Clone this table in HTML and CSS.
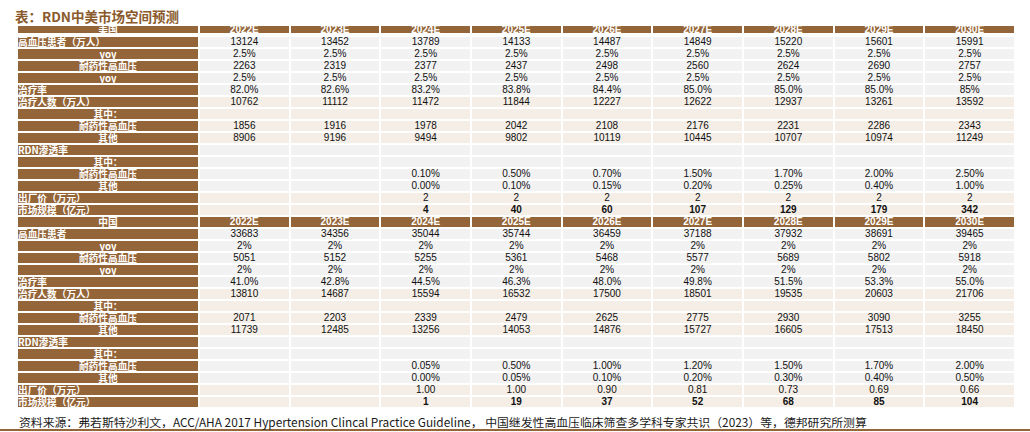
FILE: index.html
```html
<!DOCTYPE html>
<html lang="zh-CN">
<head>
<meta charset="utf-8">
<title>RDN中美市场空间预测</title>
<link rel="stylesheet" href="styles.css">
</head>
<body>
<h1 class="title">表：RDN中美市场空间预测</h1>
<div class="table">
  <div class="row hd clip"><div class="lbl">美国</div><div class="c">2022E</div><div class="c">2023E</div><div class="c">2024E</div><div class="c">2025E</div><div class="c">2026E</div><div class="c">2027E</div><div class="c">2028E</div><div class="c">2029E</div><div class="c">2030E</div></div>
  <div class="row g"><div class="lbl l">高血压患者（万人）</div><div class="c">13124</div><div class="c">13452</div><div class="c">13789</div><div class="c">14133</div><div class="c">14487</div><div class="c">14849</div><div class="c">15220</div><div class="c">15601</div><div class="c">15991</div></div>
  <div class="row g"><div class="lbl">yoy</div><div class="c">2.5%</div><div class="c">2.5%</div><div class="c">2.5%</div><div class="c">2.5%</div><div class="c">2.5%</div><div class="c">2.5%</div><div class="c">2.5%</div><div class="c">2.5%</div><div class="c">2.5%</div></div>
  <div class="row g"><div class="lbl">耐药性高血压</div><div class="c">2263</div><div class="c">2319</div><div class="c">2377</div><div class="c">2437</div><div class="c">2498</div><div class="c">2560</div><div class="c">2624</div><div class="c">2690</div><div class="c">2757</div></div>
  <div class="row g"><div class="lbl">yoy</div><div class="c">2.5%</div><div class="c">2.5%</div><div class="c">2.5%</div><div class="c">2.5%</div><div class="c">2.5%</div><div class="c">2.5%</div><div class="c">2.5%</div><div class="c">2.5%</div><div class="c">2.5%</div></div>
  <div class="row g"><div class="lbl l">治疗率</div><div class="c">82.0%</div><div class="c">82.6%</div><div class="c">83.2%</div><div class="c">83.8%</div><div class="c">84.4%</div><div class="c">85.0%</div><div class="c">85.0%</div><div class="c">85.0%</div><div class="c">85%</div></div>
  <div class="row b"><div class="lbl l">治疗人数（万人）</div><div class="c">10762</div><div class="c">11112</div><div class="c">11472</div><div class="c">11844</div><div class="c">12227</div><div class="c">12622</div><div class="c">12937</div><div class="c">13261</div><div class="c">13592</div></div>
  <div class="row b"><div class="lbl">其中：</div><div class="c"></div><div class="c"></div><div class="c"></div><div class="c"></div><div class="c"></div><div class="c"></div><div class="c"></div><div class="c"></div><div class="c"></div></div>
  <div class="row b"><div class="lbl">耐药性高血压</div><div class="c">1856</div><div class="c">1916</div><div class="c">1978</div><div class="c">2042</div><div class="c">2108</div><div class="c">2176</div><div class="c">2231</div><div class="c">2286</div><div class="c">2343</div></div>
  <div class="row b"><div class="lbl">其他</div><div class="c">8906</div><div class="c">9196</div><div class="c">9494</div><div class="c">9802</div><div class="c">10119</div><div class="c">10445</div><div class="c">10707</div><div class="c">10974</div><div class="c">11249</div></div>
  <div class="row g"><div class="lbl l">RDN渗透率</div><div class="c"></div><div class="c"></div><div class="c"></div><div class="c"></div><div class="c"></div><div class="c"></div><div class="c"></div><div class="c"></div><div class="c"></div></div>
  <div class="row g"><div class="lbl">其中：</div><div class="c"></div><div class="c"></div><div class="c"></div><div class="c"></div><div class="c"></div><div class="c"></div><div class="c"></div><div class="c"></div><div class="c"></div></div>
  <div class="row g"><div class="lbl">耐药性高血压</div><div class="c"></div><div class="c"></div><div class="c">0.10%</div><div class="c">0.50%</div><div class="c">0.70%</div><div class="c">1.50%</div><div class="c">1.70%</div><div class="c">2.00%</div><div class="c">2.50%</div></div>
  <div class="row g"><div class="lbl">其他</div><div class="c"></div><div class="c"></div><div class="c">0.00%</div><div class="c">0.10%</div><div class="c">0.15%</div><div class="c">0.20%</div><div class="c">0.25%</div><div class="c">0.40%</div><div class="c">1.00%</div></div>
  <div class="row b"><div class="lbl l">出厂价（万元）</div><div class="c"></div><div class="c"></div><div class="c">2</div><div class="c">2</div><div class="c">2</div><div class="c">2</div><div class="c">2</div><div class="c">2</div><div class="c">2</div></div>
  <div class="row b tot"><div class="lbl l">市场规模（亿元）</div><div class="c"></div><div class="c"></div><div class="c">4</div><div class="c">40</div><div class="c">60</div><div class="c">107</div><div class="c">129</div><div class="c">179</div><div class="c">342</div></div>

  <div class="row hd"><div class="lbl">中国</div><div class="c">2022E</div><div class="c">2023E</div><div class="c">2024E</div><div class="c">2025E</div><div class="c">2026E</div><div class="c">2027E</div><div class="c">2028E</div><div class="c">2029E</div><div class="c">2030E</div></div>
  <div class="row g"><div class="lbl l">高血压患者</div><div class="c">33683</div><div class="c">34356</div><div class="c">35044</div><div class="c">35744</div><div class="c">36459</div><div class="c">37188</div><div class="c">37932</div><div class="c">38691</div><div class="c">39465</div></div>
  <div class="row g"><div class="lbl">yoy</div><div class="c">2%</div><div class="c">2%</div><div class="c">2%</div><div class="c">2%</div><div class="c">2%</div><div class="c">2%</div><div class="c">2%</div><div class="c">2%</div><div class="c">2%</div></div>
  <div class="row g"><div class="lbl">耐药性高血压</div><div class="c">5051</div><div class="c">5152</div><div class="c">5255</div><div class="c">5361</div><div class="c">5468</div><div class="c">5577</div><div class="c">5689</div><div class="c">5802</div><div class="c">5918</div></div>
  <div class="row g"><div class="lbl">yoy</div><div class="c">2%</div><div class="c">2%</div><div class="c">2%</div><div class="c">2%</div><div class="c">2%</div><div class="c">2%</div><div class="c">2%</div><div class="c">2%</div><div class="c">2%</div></div>
  <div class="row g"><div class="lbl l">治疗率</div><div class="c">41.0%</div><div class="c">42.8%</div><div class="c">44.5%</div><div class="c">46.3%</div><div class="c">48.0%</div><div class="c">49.8%</div><div class="c">51.5%</div><div class="c">53.3%</div><div class="c">55.0%</div></div>
  <div class="row b"><div class="lbl l">治疗人数（万人）</div><div class="c">13810</div><div class="c">14687</div><div class="c">15594</div><div class="c">16532</div><div class="c">17500</div><div class="c">18501</div><div class="c">19535</div><div class="c">20603</div><div class="c">21706</div></div>
  <div class="row b"><div class="lbl">其中：</div><div class="c"></div><div class="c"></div><div class="c"></div><div class="c"></div><div class="c"></div><div class="c"></div><div class="c"></div><div class="c"></div><div class="c"></div></div>
  <div class="row b"><div class="lbl">耐药性高血压</div><div class="c">2071</div><div class="c">2203</div><div class="c">2339</div><div class="c">2479</div><div class="c">2625</div><div class="c">2775</div><div class="c">2930</div><div class="c">3090</div><div class="c">3255</div></div>
  <div class="row b"><div class="lbl">其他</div><div class="c">11739</div><div class="c">12485</div><div class="c">13256</div><div class="c">14053</div><div class="c">14876</div><div class="c">15727</div><div class="c">16605</div><div class="c">17513</div><div class="c">18450</div></div>
  <div class="row g"><div class="lbl l">RDN渗透率</div><div class="c"></div><div class="c"></div><div class="c"></div><div class="c"></div><div class="c"></div><div class="c"></div><div class="c"></div><div class="c"></div><div class="c"></div></div>
  <div class="row g"><div class="lbl">其中：</div><div class="c"></div><div class="c"></div><div class="c"></div><div class="c"></div><div class="c"></div><div class="c"></div><div class="c"></div><div class="c"></div><div class="c"></div></div>
  <div class="row g"><div class="lbl">耐药性高血压</div><div class="c"></div><div class="c"></div><div class="c">0.05%</div><div class="c">0.50%</div><div class="c">1.00%</div><div class="c">1.20%</div><div class="c">1.50%</div><div class="c">1.70%</div><div class="c">2.00%</div></div>
  <div class="row g"><div class="lbl">其他</div><div class="c"></div><div class="c"></div><div class="c">0.00%</div><div class="c">0.05%</div><div class="c">0.10%</div><div class="c">0.20%</div><div class="c">0.30%</div><div class="c">0.40%</div><div class="c">0.50%</div></div>
  <div class="row b"><div class="lbl l">出厂价（万元）</div><div class="c"></div><div class="c"></div><div class="c">1.00</div><div class="c">1.00</div><div class="c">0.90</div><div class="c">0.81</div><div class="c">0.73</div><div class="c">0.69</div><div class="c">0.66</div></div>
  <div class="row b tot"><div class="lbl l">市场规模（亿元）</div><div class="c"></div><div class="c"></div><div class="c">1</div><div class="c">19</div><div class="c">37</div><div class="c">52</div><div class="c">68</div><div class="c">85</div><div class="c">104</div></div>
</div>
<p class="src">资料来源：弗若斯特沙利文，ACC/AHA 2017 Hypertension Clincal Practice Guideline， 中国继发性高血压临床筛查多学科专家共识（2023）等，德邦研究所测算</p>
</body>
</html>
```

FILE: styles.css
```css
html, body {
  margin: 0;
  padding: 0;
  background: #ffffff;
}

body {
  width: 1030px;
  height: 432px;
  overflow: hidden;
  font-family: "Liberation Sans", "Noto Sans CJK SC", sans-serif;
}

.title {
  margin: 0;
  padding: 11px 0 0 15px;
  font: bold 13.5px/11px "Noto Sans CJK SC", sans-serif;
  color: #8a5a2c;
}

.table {
  margin: 4px 0 0 18px;
  width: 996px;
  display: flex;
  flex-direction: column;
  gap: 2px;
}

.row {
  display: grid;
  grid-template-columns: 180px repeat(9, 1fr);
  column-gap: 2px;
  height: 10px;
}

.row > div {
  white-space: nowrap;
}

.lbl {
  background: #946538;
  color: #ffffff;
  font: bold 9.7px/10px "Noto Sans CJK SC", sans-serif;
  text-align: center;
}

.lbl.l {
  text-align: left;
}

.c {
  font-family: "Liberation Sans", sans-serif;
  font-size: 10px;
  line-height: 10px;
  text-align: center;
  color: #111111;
}

.g .c {
  background: #f2f2f2;
}

.b .c {
  background: #f4eee7;
}

.tot .c {
  font-weight: bold;
}

.hd .c {
  background: #946538;
  color: #ffffff;
  font-weight: bold;
}

.clip {
  height: 7px;
  margin-bottom: 2px;
}

.clip > div,
.clip > .c,
.clip > .lbl {
  line-height: 7px;
}

.src {
  margin: 0;
  padding: 8px 0 0 19px;
  font: 11.85px/14px "Noto Sans CJK SC", sans-serif;
  color: #1a1a1a;
  border-bottom: 2px solid #946538;
}
```
